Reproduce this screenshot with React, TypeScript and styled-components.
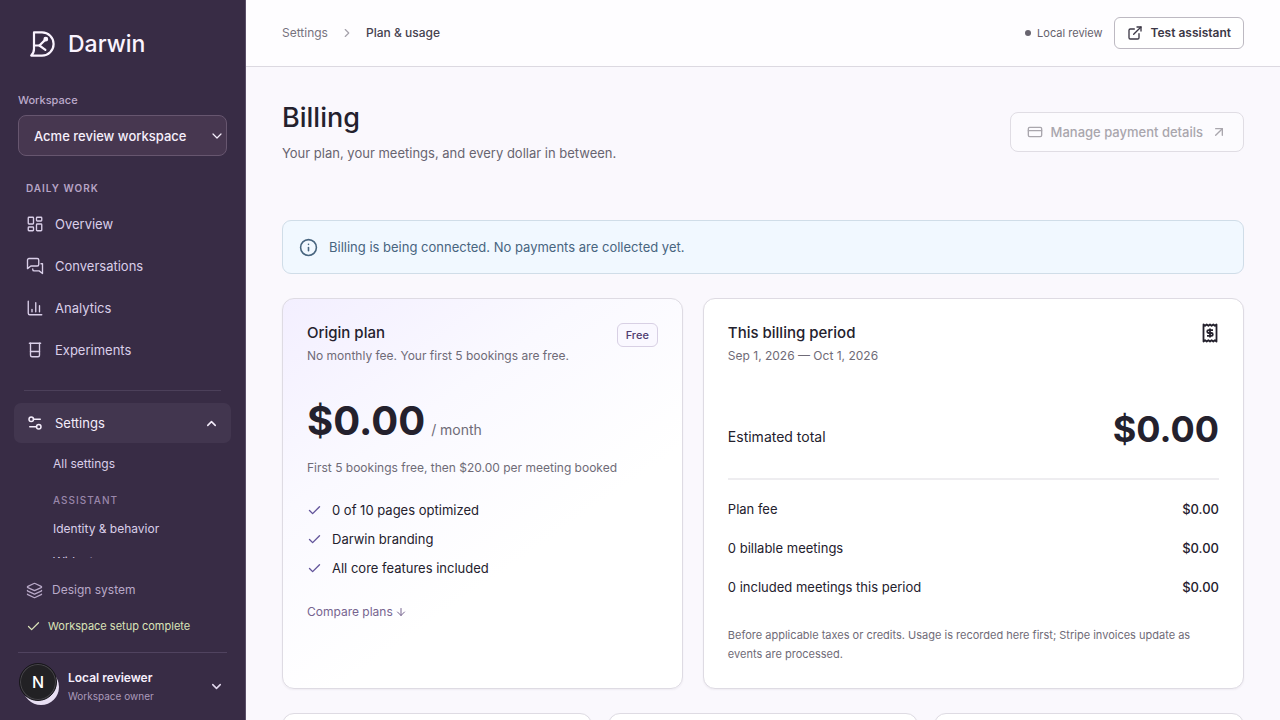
import React from "react";
import styled, { createGlobalStyle } from "styled-components";
import {
  ArrowDown,
  ArrowUpRight,
  Beaker,
  ChartColumn,
  Check,
  ChevronDown,
  ChevronRight,
  ChevronUp,
  CreditCard,
  ExternalLink,
  Info,
  Layers,
  LayoutDashboard,
  Settings2,
} from "lucide-react";

const GlobalStyle = createGlobalStyle`
  * { box-sizing: border-box; }
  body {
    margin: 0;
    background: #faf8fd;
    color: #24212d;
    font-family: Inter, "Liberation Sans", sans-serif;
    font-size: 13px;
    line-height: 20px;
  }
  h1, h2, p, ul, dl, dd { margin: 0; padding: 0; }
  ul { list-style: none; }
  a { color: inherit; text-decoration: none; }
  button, select { font: inherit; color: inherit; }
`;

const Shell = styled.div`
  display: flex;
  height: 100vh;
  overflow: hidden;
`;

/* Sidebar */

const Sidebar = styled.aside`
  display: flex;
  flex-direction: column;
  flex: none;
  width: 246px;
  background: #382c45;
  border-right: 1px solid #5b4f68;
  color: #dacfe9;
`;

const Brand = styled.a`
  display: flex;
  align-items: center;
  gap: 11px;
  padding: 30px 29px 0;
  color: #fbf4ff;
  font-size: 23px;
  font-weight: 500;
  line-height: 28px;
`;

const WorkspaceField = styled.label`
  display: block;
  padding: 34px 18px 0;
  color: #bcaacb;
  font-size: 11px;
  font-weight: 500;
  line-height: 16px;
`;

const SelectBox = styled.span`
  display: grid;
  grid-template-columns: 1fr 18px;
  align-items: center;
  margin-top: 7px;
  color: #f6effc;

  select {
    grid-area: 1 / 1 / 2 / 3;
    width: 100%;
    height: 41px;
    padding: 0 28px 0 15px;
    appearance: none;
    border: 1px solid #67566f;
    border-radius: 8px;
    background: #473750;
    font-size: 13px;
  }

  svg {
    grid-area: 1 / 2;
    pointer-events: none;
  }
`;

const NavScroll = styled.nav`
  flex: 1;
  min-height: 0;
  margin-top: 24px;
  padding: 0 14px;
  overflow: hidden;
`;

const GroupLabel = styled.p<{ $nested?: boolean }>`
  padding-left: ${(p) => (p.$nested ? 39 : 12)}px;
  margin: ${(p) => (p.$nested ? "12px 0 4px" : "0 0 7px")};
  color: ${(p) => (p.$nested ? "#9a87ab" : "#b7a4c6")};
  font-size: 10px;
  font-weight: ${(p) => (p.$nested ? 500 : 600)};
  letter-spacing: 1px;
  line-height: 16px;
  text-transform: uppercase;
`;

const NavItem = styled.a`
  display: flex;
  align-items: center;
  gap: 11px;
  height: 42px;
  padding-left: 12px;
`;

const Divider = styled.hr`
  height: 1px;
  margin: 19px 10px 12px;
  border: 0;
  background: #4c405a;
`;

const SettingsToggle = styled.button`
  display: flex;
  align-items: center;
  gap: 11px;
  width: 100%;
  height: 40px;
  margin-bottom: 4px;
  padding: 0 12px;
  border: 0;
  border-radius: 7px;
  background: #42364f;
  color: #f4edfb;
  text-align: left;

  span { flex: 1; }
`;

const SubItem = styled.a`
  display: flex;
  align-items: center;
  height: 33px;
  padding-left: 39px;
  font-size: 12px;
`;

const SidebarFooter = styled.div`
  padding: 14px 18px 0;
`;

const FooterLink = styled.a<{ $done?: boolean }>`
  display: flex;
  align-items: center;
  gap: ${(p) => (p.$done ? 7 : 9)}px;
  height: 36px;
  padding-left: 8px;
  color: ${(p) => (p.$done ? "#dbe3b8" : "#b9a9c8")};
  font-size: ${(p) => (p.$done ? 11 : 12)}px;
`;

const UserButton = styled.button`
  display: flex;
  align-items: center;
  gap: 9px;
  width: 100%;
  height: 68px;
  margin-top: 8px;
  padding: 0 3px 0 5px;
  border: 0;
  border-top: 1px solid #50435f;
  background: none;
  text-align: left;
`;

const Avatar = styled.span`
  position: relative;
  flex: none;
  width: 36px;
  height: 36px;
  border-radius: 50%;
  background: #e8dff3;
`;

const DevBadge = styled.span`
  position: absolute;
  top: -6px;
  left: -4px;
  display: grid;
  place-items: center;
  width: 38px;
  height: 38px;
  border: 1px solid #17161a;
  border-radius: 50%;
  background: #222124;
  box-shadow: inset 0 0 0 1px #48464b;
  color: #ffffff;
  font-size: 16px;
  font-weight: 500;
`;

const UserText = styled.span`
  display: flex;
  flex: 1;
  flex-direction: column;
  color: #ab9aba;
  font-size: 10px;
  line-height: 18px;

  strong {
    color: #f6effc;
    font-size: 12px;
    font-weight: 600;
  }
`;

/* Main column */

const Page = styled.div`
  display: flex;
  flex: 1;
  flex-direction: column;
  min-width: 0;
`;

const Topbar = styled.header`
  display: flex;
  align-items: center;
  justify-content: space-between;
  flex: none;
  height: 67px;
  padding: 0 36px;
  border-bottom: 1px solid #dcd9e1;
  background: #fefdff;
`;

const Breadcrumb = styled.nav`
  display: flex;
  align-items: center;
  gap: 12px;
  color: #77737e;
  font-size: 12px;

  svg { color: #a5a1ab; }

  strong {
    color: #46424f;
    font-weight: 500;
  }
`;

const TopActions = styled.div`
  display: flex;
  align-items: center;
  gap: 12px;
`;

const Status = styled.span`
  display: flex;
  align-items: center;
  gap: 6px;
  color: #65616c;
  font-size: 11px;

  &::before {
    content: "";
    width: 6px;
    height: 6px;
    border-radius: 50%;
    background: #68646f;
  }
`;

const Button = styled.button<{ $small?: boolean }>`
  display: flex;
  align-items: center;
  gap: ${(p) => (p.$small ? 7 : 8)}px;
  height: ${(p) => (p.$small ? 32 : 40)}px;
  padding: 0 ${(p) => (p.$small ? 12 : 16)}px;
  border: 1px solid #bdb9c2;
  border-radius: ${(p) => (p.$small ? 6 : 8)}px;
  background: #ffffff;
  color: #3c3846;
  font-size: ${(p) => (p.$small ? 12 : 13)}px;
  font-weight: ${(p) => (p.$small ? 600 : 500)};

  &:disabled {
    border-color: #e0dde4;
    background: #fcfbfe;
    color: #a9a6ad;
  }
`;

const Content = styled.main`
  flex: 1;
  min-height: 0;
  padding: 34px 36px;
  overflow-y: auto;
  scrollbar-width: none;
`;

const PageHeader = styled.div`
  display: flex;
  align-items: center;
  justify-content: space-between;
  margin-bottom: 57px;

  h1 {
    font-size: 27px;
    font-weight: 500;
    line-height: 34px;
  }

  p {
    margin-top: 8px;
    color: #686470;
    line-height: 20px;
  }
`;

const Notice = styled.div`
  display: flex;
  align-items: center;
  gap: 11px;
  height: 54px;
  margin-bottom: 24px;
  padding: 0 16px;
  border: 1px solid #d0dde8;
  border-radius: 9px;
  background: #f1f8ff;
  color: #48657f;
`;

const PlanGrid = styled.div`
  display: grid;
  grid-template-columns: minmax(0, 100fr) minmax(0, 135fr);
  gap: 20px;
`;

const Card = styled.section<{ $tinted?: boolean }>`
  padding: 24px;
  border: 1px solid #dedbe3;
  border-radius: 12px;
  background: ${(p) =>
    p.$tinted ? "linear-gradient(145deg, #f3efff 0%, #faf9ff 32%, #ffffff 64%)" : "#ffffff"};
  box-shadow: 0 1px 2px rgba(50, 35, 70, 0.06);
`;

const CardHeader = styled.div`
  display: flex;
  align-items: flex-start;
  justify-content: space-between;

  h2 {
    font-size: 15px;
    font-weight: 500;
    line-height: 20px;
  }

  p {
    margin-top: 4px;
    color: #6f6b77;
    font-size: 12px;
    line-height: 18px;
  }
`;

const Badge = styled.span`
  padding: 2px 8px;
  border: 1px solid #d8d0e4;
  border-radius: 6px;
  background: #faf8ff;
  color: #503c70;
  font-size: 11px;
  font-weight: 500;
  line-height: 18px;
`;

const Price = styled.p`
  display: flex;
  align-items: baseline;
  gap: 6px;
  margin-top: 34px;
  color: #6f6b77;
  font-size: 14px;
  line-height: 44px;

  strong {
    color: #24212d;
    font-size: 40px;
    font-weight: 700;
  }
`;

const PriceNote = styled.p`
  margin-top: 7px;
  color: #6f6b77;
  font-size: 12px;
  line-height: 18px;
`;

const Features = styled.ul`
  display: grid;
  gap: 9px;
  margin: 23px 0;

  li {
    display: flex;
    align-items: center;
    gap: 10px;
  }

  svg { color: #62549a; }
`;

const CompareLink = styled.a`
  display: inline-flex;
  align-items: center;
  gap: 2px;
  color: #76648f;
  font-size: 12px;
  line-height: 18px;
`;

const Total = styled.div`
  display: flex;
  align-items: baseline;
  justify-content: space-between;
  margin-top: 42px;
  padding-bottom: 19px;
  border-bottom: 2px solid #eeedf0;
  font-size: 14px;
  line-height: 44px;

  strong {
    font-size: 36px;
    font-weight: 700;
  }
`;

const Lines = styled.dl`
  padding-top: 10px;

  div {
    display: flex;
    justify-content: space-between;
    line-height: 39px;
  }

  dd { font-weight: 500; }
`;

const FinePrint = styled.p`
  margin-top: 19px;
  color: #6f6b77;
  font-size: 11px;
  line-height: 19px;
`;

const UsageGrid = styled.div`
  display: grid;
  grid-template-columns: repeat(3, minmax(0, 1fr));
  gap: 16px;
  margin-top: 24px;
`;

const UsageCard = styled(Card)`
  min-height: 120px;
`;

function DarwinMark() {
  return (
    <svg width="28" height="28" viewBox="0 0 28 28" fill="none" stroke="currentColor" strokeWidth="2.2" strokeLinecap="round" strokeLinejoin="round" aria-hidden="true">
      <path d="M5 2.400H13a11.600 11.600 0 0 1 0 23.200H2.200C4.400 23.600 5 21.600 5 19Z" />
      <path d="M5.200 15.500H10.400L16.400 9.600" />
      <path d="M10.400 15.500l6 4.300" />
      <circle cx="16.800" cy="9.200" r="1.300" fill="currentColor" />
    </svg>
  );
}

function ConversationsIcon() {
  return (
    <svg width="18" height="18" viewBox="0 0 24 24" fill="none" stroke="currentColor" strokeWidth="1.800" strokeLinecap="round" strokeLinejoin="round" aria-hidden="true">
      <path d="M15 12H6.500L2 15.500V4a2 2 0 0 1 2-2h11a2 2 0 0 1 2 2v6a2 2 0 0 1-2 2Z" />
      <path d="M20 9h2v13l-4.500-3.500H11a2 2 0 0 1-2-2V16" />
    </svg>
  );
}

function ReceiptIcon() {
  return (
    <svg width="18" height="20" viewBox="0 0 18 20" fill="none" stroke="currentColor" strokeWidth="1.800" strokeLinejoin="round" aria-hidden="true">
      <path d="M2.500 1.500l1.600 1.300 1.600-1.300 1.700 1.300L9 1.500l1.600 1.300 1.700-1.300 1.600 1.300 1.600-1.300v17l-1.600-1.300-1.600 1.300-1.700-1.300L9 18.500l-1.600-1.300-1.700 1.300-1.600-1.300-1.600 1.300Z" />
      <path d="M12 7.200H7.600a1.400 1.400 0 0 0 0 2.800h2.800a1.400 1.400 0 0 1 0 2.800H6M9 5.600v8.800" />
    </svg>
  );
}

const navItems = [
  { label: "Overview", icon: <LayoutDashboard size={18} strokeWidth={1.8} /> },
  { label: "Conversations", icon: <ConversationsIcon /> },
  { label: "Analytics", icon: <ChartColumn size={18} strokeWidth={1.8} /> },
  { label: "Experiments", icon: <Beaker size={18} strokeWidth={1.8} /> },
];

const features = ["0 of 10 pages optimized", "Darwin branding", "All core features included"];

const lines = [
  ["Plan fee", "$0.00"],
  ["0 billable meetings", "$0.00"],
  ["0 included meetings this period", "$0.00"],
];

export default function App() {
  return (
    <Shell>
      <GlobalStyle />
      <Sidebar>
        <Brand href="#">
          <DarwinMark />
          Darwin
        </Brand>
        <WorkspaceField>
          Workspace
          <SelectBox>
            <select defaultValue="acme">
              <option value="acme">Acme review workspace</option>
            </select>
            <ChevronDown size={16} strokeWidth={1.8} />
          </SelectBox>
        </WorkspaceField>
        <NavScroll>
          <GroupLabel>Daily work</GroupLabel>
          {navItems.map((item) => (
            <NavItem href="#" key={item.label}>
              {item.icon}
              {item.label}
            </NavItem>
          ))}
          <Divider />
          <SettingsToggle aria-expanded="true">
            <Settings2 size={18} strokeWidth={2} />
            <span>Settings</span>
            <ChevronUp size={15} strokeWidth={2.4} />
          </SettingsToggle>
          <SubItem href="#">All settings</SubItem>
          <GroupLabel $nested>Assistant</GroupLabel>
          <SubItem href="#">Identity &amp; behavior</SubItem>
          <SubItem href="#">Widget</SubItem>
        </NavScroll>
        <SidebarFooter>
          <FooterLink href="#">
            <Layers size={17} strokeWidth={1.8} />
            Design system
          </FooterLink>
          <FooterLink href="#" $done>
            <Check size={15} strokeWidth={2} />
            Workspace setup complete
          </FooterLink>
          <UserButton>
            <Avatar>
              <DevBadge>N</DevBadge>
            </Avatar>
            <UserText>
              <strong>Local reviewer</strong>
              Workspace owner
            </UserText>
            <ChevronDown size={15} strokeWidth={2.4} color="#e3d9ee" />
          </UserButton>
        </SidebarFooter>
      </Sidebar>

      <Page>
        <Topbar>
          <Breadcrumb aria-label="Breadcrumb">
            <a href="#">Settings</a>
            <ChevronRight size={14} strokeWidth={2} />
            <strong>Plan &amp; usage</strong>
          </Breadcrumb>
          <TopActions>
            <Status>Local review</Status>
            <Button $small>
              <ExternalLink size={16} strokeWidth={2} />
              Test assistant
            </Button>
          </TopActions>
        </Topbar>

        <Content>
          <PageHeader>
            <div>
              <h1>Billing</h1>
              <p>Your plan, your meetings, and every dollar in between.</p>
            </div>
            <Button disabled>
              <CreditCard size={16} strokeWidth={2} />
              Manage payment details
              <ArrowUpRight size={16} strokeWidth={2} />
            </Button>
          </PageHeader>

          <Notice role="status">
            <Info size={19} strokeWidth={2} />
            Billing is being connected. No payments are collected yet.
          </Notice>

          <PlanGrid>
            <Card $tinted>
              <CardHeader>
                <div>
                  <h2>Origin plan</h2>
                  <p>No monthly fee. Your first 5 bookings are free.</p>
                </div>
                <Badge>Free</Badge>
              </CardHeader>
              <Price>
                <strong>$0.00</strong>/ month
              </Price>
              <PriceNote>First 5 bookings free, then $20.00 per meeting booked</PriceNote>
              <Features>
                {features.map((feature) => (
                  <li key={feature}>
                    <Check size={15} strokeWidth={2.2} />
                    {feature}
                  </li>
                ))}
              </Features>
              <CompareLink href="#">
                Compare plans
                <ArrowDown size={12} strokeWidth={2} />
              </CompareLink>
            </Card>

            <Card>
              <CardHeader>
                <div>
                  <h2>This billing period</h2>
                  <p>Sep 1, 2026 — Oct 1, 2026</p>
                </div>
                <ReceiptIcon />
              </CardHeader>
              <Total>
                Estimated total
                <strong>$0.00</strong>
              </Total>
              <Lines>
                {lines.map(([label, amount]) => (
                  <div key={label}>
                    <dt>{label}</dt>
                    <dd>{amount}</dd>
                  </div>
                ))}
              </Lines>
              <FinePrint>
                Before applicable taxes or credits. Usage is recorded here first; Stripe invoices update as events are
                processed.
              </FinePrint>
            </Card>
          </PlanGrid>

          <UsageGrid>
            <UsageCard />
            <UsageCard />
            <UsageCard />
          </UsageGrid>
        </Content>
      </Page>
    </Shell>
  );
}
